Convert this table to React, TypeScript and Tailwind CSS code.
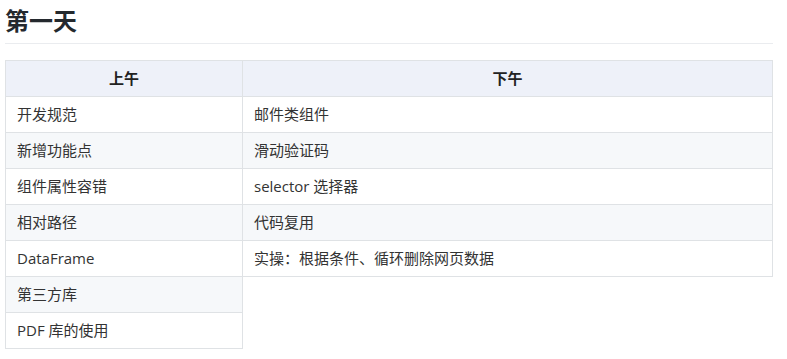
const ROWS: [string, string | null][] = [
  ["开发规范", "邮件类组件"],
  ["新增功能点", "滑动验证码"],
  ["组件属性容错", "selector 选择器"],
  ["相对路径", "代码复用"],
  ["DataFrame", "实操：根据条件、循环删除网页数据"],
  ["第三方库", null],
  ["PDF 库的使用", null],
];

export default function App() {
  return (
    <div
      className="w-[787px] h-[359px] bg-white px-[5px] pt-[6px] overflow-hidden"
      style={{ fontFamily: '"Open Sans", "Noto Sans CJK SC", sans-serif' }}
    >
      <h2 className="w-[768px] text-[24px] leading-[30px] font-bold text-[#24292e] pb-[7px] border-b border-[#eaecef]">
        第一天
      </h2>
      <table className="mt-[16px] w-[768px] border-collapse text-[15px] text-[#333]">
        <thead>
          <tr className="h-[36px] bg-[#eef1f9]">
            <th className="w-[237px] border border-[#dfe2e5] font-bold text-center text-[#222]">上午</th>
            <th className="border border-[#dfe2e5] font-bold text-center text-[#222]">下午</th>
          </tr>
        </thead>
        <tbody>
          {ROWS.map(([am, pm], i) => (
            <tr key={am} className={i % 2 === 1 ? "h-[36px] bg-[#f6f8fa]" : "h-[36px] bg-white"}>
              <td className="border border-[#dfe2e5] px-[11px] p-0">{am}</td>
              {pm !== null && <td className="border border-[#dfe2e5] px-[11px] p-0">{pm}</td>}
            </tr>
          ))}
        </tbody>
      </table>
    </div>
  );
}
